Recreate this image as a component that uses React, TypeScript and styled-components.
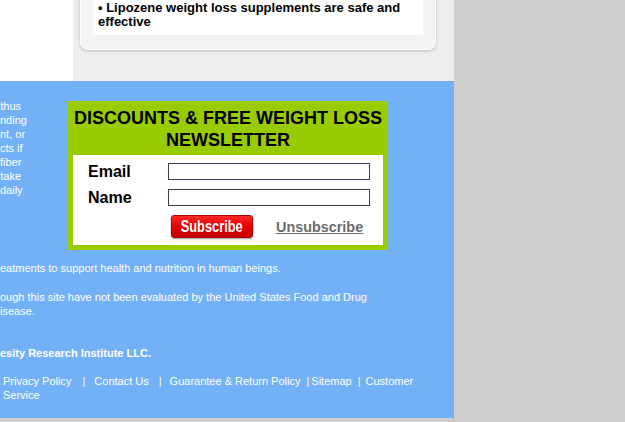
import styled, { createGlobalStyle } from 'styled-components'

const GlobalStyle = createGlobalStyle`
  html, body {
    margin: 0;
    padding: 0;
    background: #cecece;
  }
  body {
    font-family: "Liberation Sans", Arial, Helvetica, sans-serif;
    overflow: hidden;
  }
`

const Page = styled.div`
  width: 454px;
`

const TopArea = styled.div`
  display: flex;
  height: 81px;
  overflow: hidden;
`

const WhiteColumn = styled.div`
  width: 73px;
  background: #fff;
`

const GrayColumn = styled.div`
  flex: 1;
  background: #eeeeee;
  padding: 0 18px 0 7px;
`

const Card = styled.div`
  margin-top: -40px;
  background: #f4f4f4;
  border: 1px solid #fff;
  border-radius: 7px;
  box-shadow: 0 1px 3px rgba(0, 0, 0, 0.22);
  padding: 13px 12px 14px;
`

const CardBody = styled.div`
  background: #fff;
  padding: 27px 5px 6px;
  color: #000;
  font-size: 13px;
  font-weight: bold;
  line-height: 14px;
`

const Footer = styled.footer`
  background: #73b1f6;
  color: #fff;
  font-size: 11px;
  line-height: 14px;
  padding: 18px 0 16px;
`

const FooterTop = styled.div`
  display: flex;
  align-items: flex-start;
`

const ClippedColumn = styled.div`
  width: 21px;
  text-align: right;
  white-space: nowrap;
`

const Newsletter = styled.div`
  box-sizing: border-box;
  width: 319px;
  margin: 2px 0 0 47px;
  background: #99cc00;
  padding: 6px 4px 5px 5px;
`

const NewsTitle = styled.div`
  color: #000;
  font-size: 18px;
  font-weight: bold;
  line-height: 22px;
  text-align: center;
  margin-bottom: 4px;
`

const NewsForm = styled.form`
  box-sizing: border-box;
  height: 90px;
  margin: 0;
  background: #fff;
  padding: 8px 0 0 15px;
`

const FieldRow = styled.div`
  display: flex;
  align-items: center;
  height: 17px;
  margin-bottom: 9px;
`

const FieldLabel = styled.label`
  width: 80px;
  color: #000;
  font-size: 16px;
  font-weight: bold;
`

const FieldInput = styled.input`
  box-sizing: border-box;
  width: 202px;
  height: 17px;
  margin: 0;
  padding: 0 3px;
  border: 1px solid #3b3b5c;
  background: #fff;
`

const ButtonRow = styled.div`
  display: flex;
  align-items: center;
  margin-left: 83px;
`

const SubscribeButton = styled.button`
  box-sizing: border-box;
  display: flex;
  align-items: center;
  justify-content: center;
  width: 82px;
  height: 23px;
  padding: 0;
  border: 1px solid #b00000;
  border-radius: 3px;
  background: linear-gradient(#ff2a2a, #e60000 45%, #c40000);
  box-shadow: 0 1px 2px rgba(0, 0, 0, 0.4);
  color: #fff;
  font-family: "Liberation Sans", Arial, sans-serif;
  font-size: 16px;
  font-weight: bold;
  cursor: pointer;
`

// no narrow face installed, so squeeze the regular bold one
const Narrow = styled.span`
  display: inline-block;
  transform: scaleX(0.8);
  white-space: nowrap;
`

const UnsubscribeLink = styled.a`
  margin-left: 23px;
  color: #6b6b6b;
  font-size: 14.4px;
  font-weight: bold;
  text-decoration: underline;
`

const Para = styled.p<{ $gap: number; $bold?: boolean }>`
  margin: ${({ $gap }) => $gap}px 0 0;
  font-weight: ${({ $bold }) => ($bold ? 'bold' : 'normal')};
  white-space: nowrap;
`

const LinksLine = styled.div`
  margin-top: 14px;
  padding-left: 3px;
  white-space: nowrap;
`

const FooterLink = styled.a`
  color: #fff;
  text-decoration: none;
`

const Sep = styled.span<{ $l: number; $r: number }>`
  margin: 0 ${({ $r }) => $r}px 0 ${({ $l }) => $l}px;
`

const clipped = ['thus', 'nding', 'nt, or', 'cts if', 'fiber', 'take', 'daily']

export default function App() {
  return (
    <>
      <GlobalStyle />
      <Page>
        <TopArea>
          <WhiteColumn />
          <GrayColumn>
            <Card>
              <CardBody>• Lipozene weight loss supplements are safe and effective</CardBody>
            </Card>
          </GrayColumn>
        </TopArea>
        <Footer>
          <FooterTop>
            <ClippedColumn>
              {clipped.map((line) => (
                <div key={line}>{line}</div>
              ))}
            </ClippedColumn>
            <Newsletter>
              <NewsTitle>
                DISCOUNTS &amp; FREE WEIGHT LOSS
                <br />
                NEWSLETTER
              </NewsTitle>
              <NewsForm onSubmit={(e) => e.preventDefault()}>
                <FieldRow>
                  <FieldLabel>Email</FieldLabel>
                  <FieldInput type="text" />
                </FieldRow>
                <FieldRow>
                  <FieldLabel>Name</FieldLabel>
                  <FieldInput type="text" />
                </FieldRow>
                <ButtonRow>
                  <SubscribeButton type="submit">
                    <Narrow>Subscribe</Narrow>
                  </SubscribeButton>
                  <UnsubscribeLink href="#">Unsubscribe</UnsubscribeLink>
                </ButtonRow>
              </NewsForm>
            </Newsletter>
          </FooterTop>
          <Para $gap={11}>eatments to support health and nutrition in human beings.</Para>
          <Para $gap={15}>
            ough this site have not been evaluated by the United States Food and Drug
            <br />
            isease.
          </Para>
          <Para $gap={28} $bold>
            esity Research Institute LLC.
          </Para>
          <LinksLine>
            <FooterLink href="#">Privacy Policy</FooterLink>
            <Sep $l={11} $r={9}>|</Sep>
            <FooterLink href="#">Contact Us</FooterLink>
            <Sep $l={10} $r={8}>|</Sep>
            <FooterLink href="#">Guarantee &amp; Return Policy</FooterLink>
            <Sep $l={6} $r={2}>|</Sep>
            <FooterLink href="#">Sitemap</FooterLink>
            <Sep $l={6} $r={5}>|</Sep>
            <FooterLink href="#">
              Customer
              <br />
              Service
            </FooterLink>
          </LinksLine>
        </Footer>
      </Page>
    </>
  )
}
